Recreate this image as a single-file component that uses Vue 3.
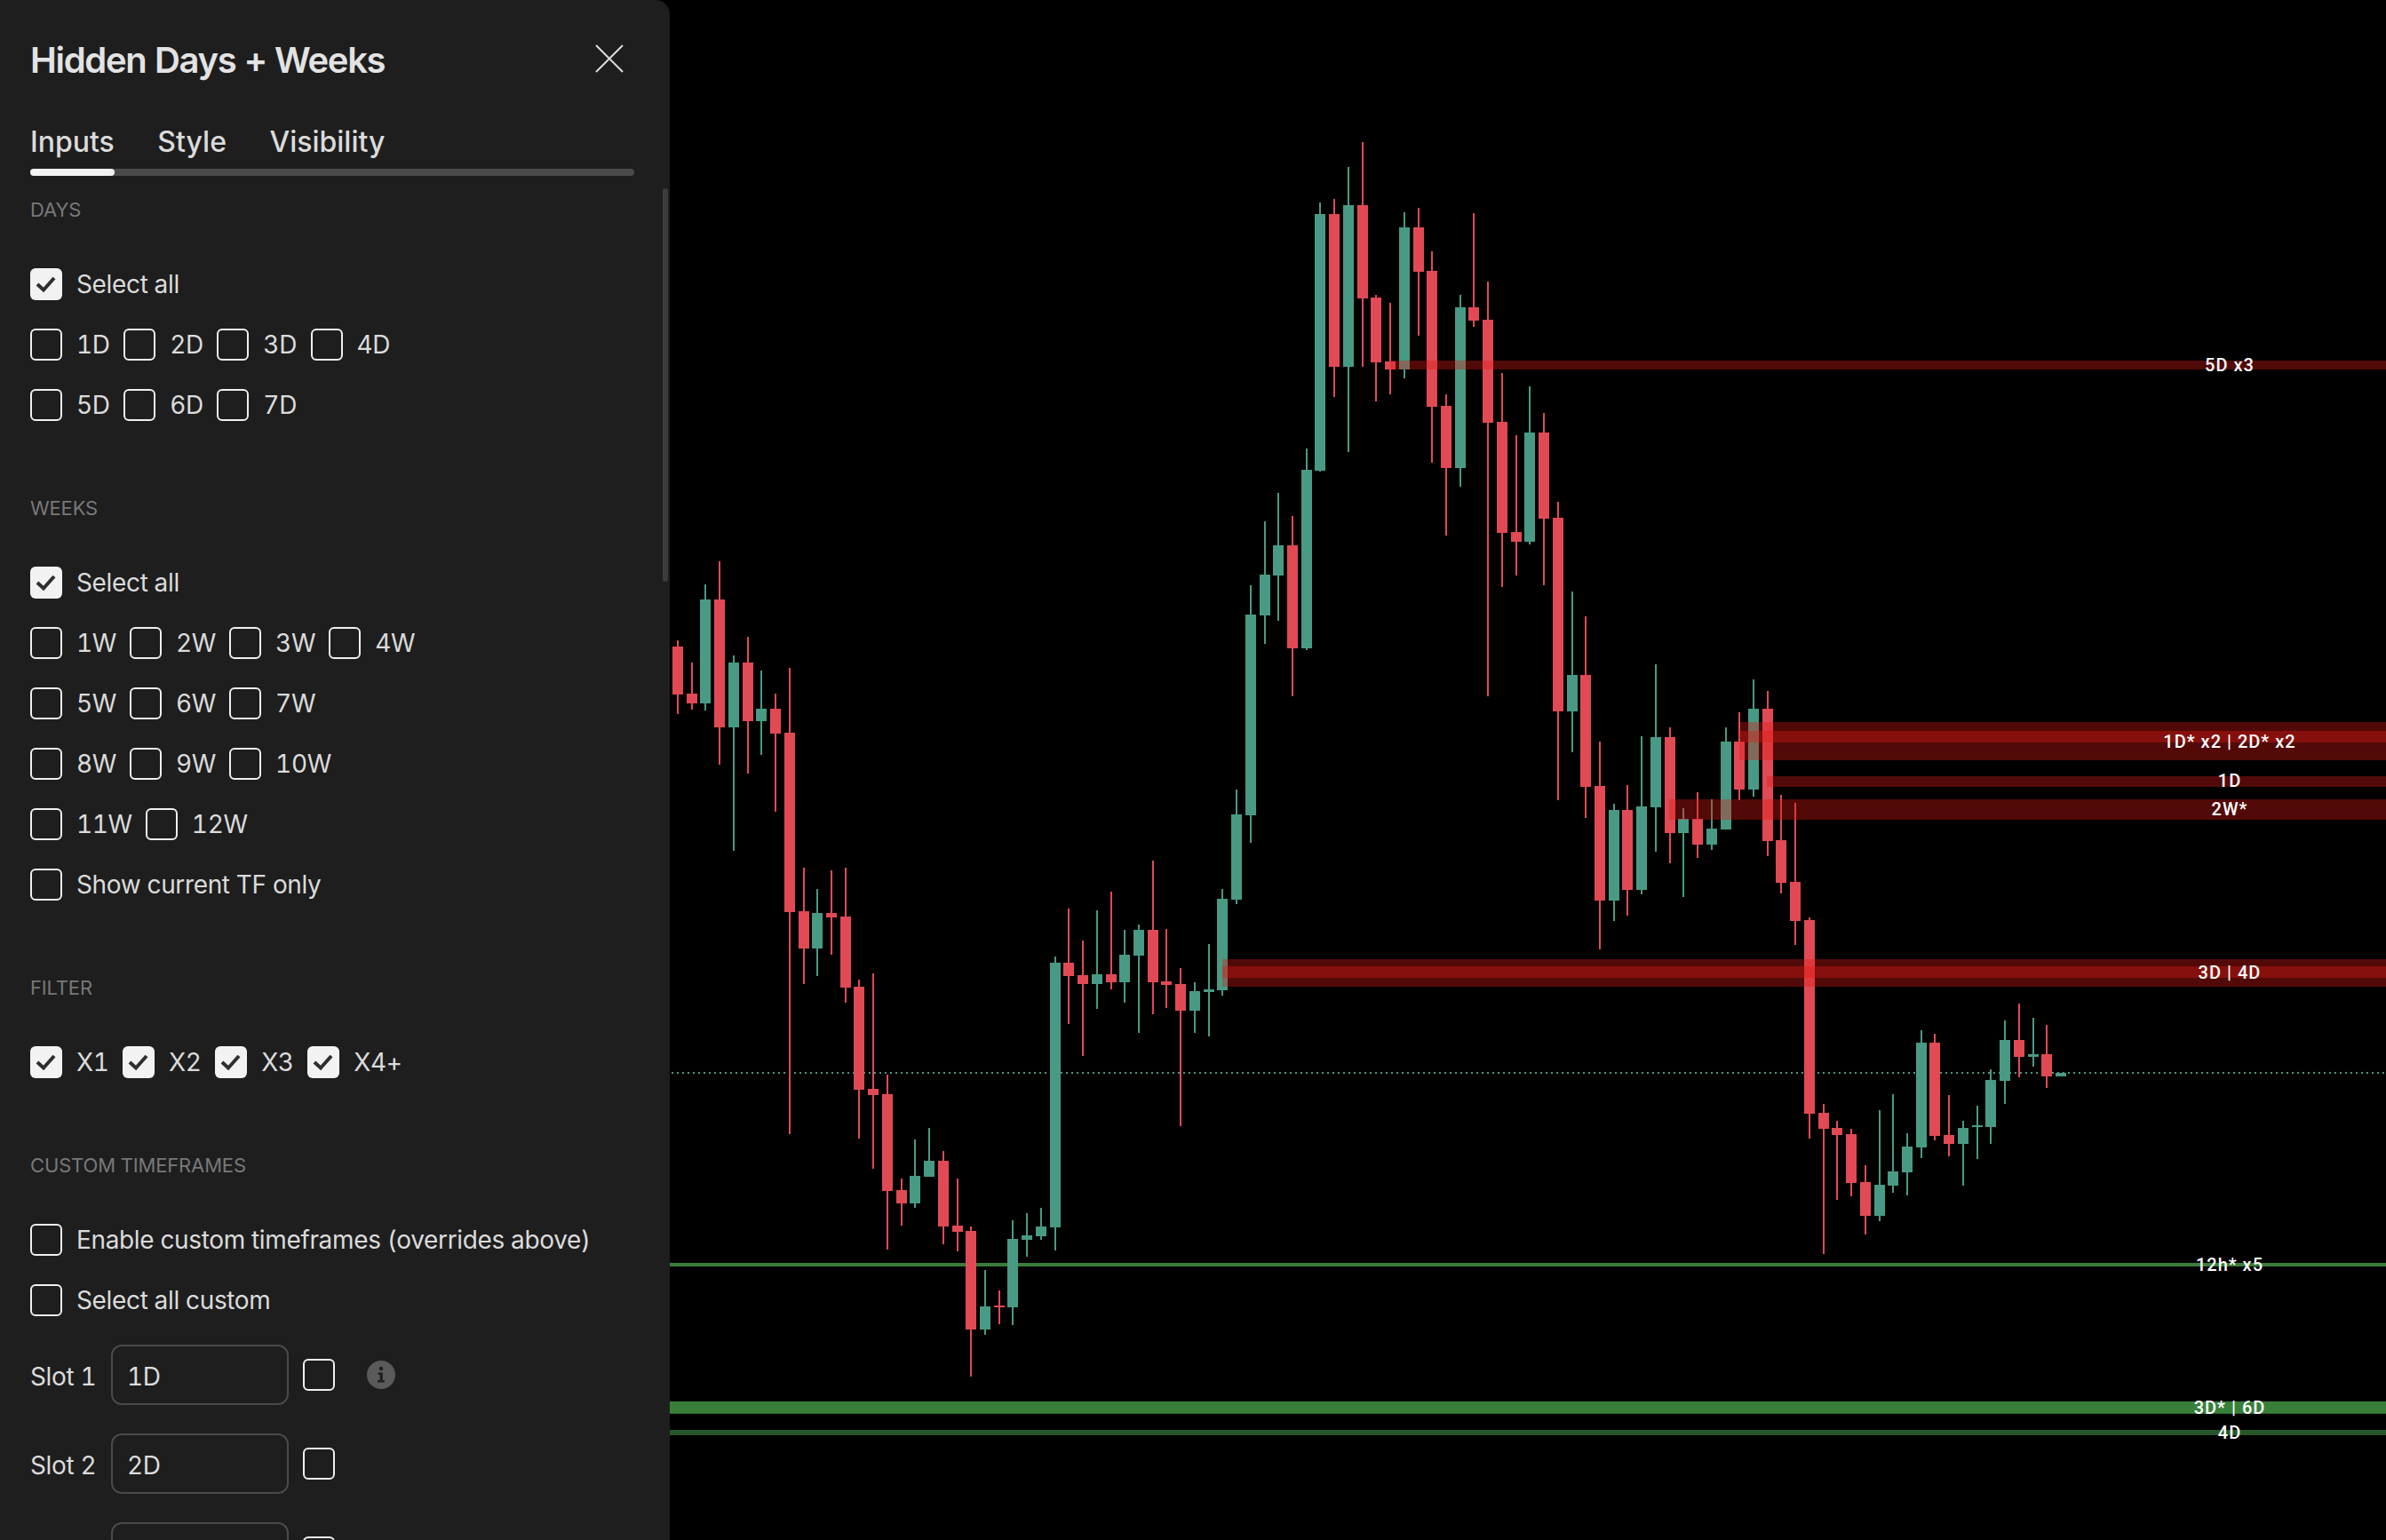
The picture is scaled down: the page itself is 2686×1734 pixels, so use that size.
<script setup>
const dayRows = [['1D', '2D', '3D', '4D'], ['5D', '6D', '7D']]
const weekRows = [['1W', '2W', '3W', '4W'], ['5W', '6W', '7W'], ['8W', '9W', '10W'], ['11W', '12W']]
const filters = ['X1', 'X2', 'X3', 'X4+']
const slots = [
  { id: 1, name: 'Slot 1', value: '1D', info: true },
  { id: 2, name: 'Slot 2', value: '2D', info: false },
  { id: 3, name: '', value: '', info: false }
]

const GREEN = '#499a84'
const RED = '#e14a54'
// direction, body top, body bottom, wick top, wick bottom
const raw = [
  ['r',728,782,721,804],['r',781,792,746,799],['g',675,792,658,800],['r',675,819,632,861],['g',746,819,738,958],
  ['r',746,812,717,871],['g',798,812,755,850],['r',798,826,781,914],['r',825,1027,752,1277],['r',1026,1068,977,1108],
  ['g',1028,1068,1001,1099],['r',1028,1033,980,1075],['r',1032,1112,977,1129],['r',1111,1227,1103,1282],['r',1226,1233,1096,1316],
  ['r',1232,1341,1210,1407],['r',1340,1355,1327,1380],['g',1324,1355,1283,1360],['g',1307,1325,1270,1325],['r',1307,1381,1296,1401],
  ['r',1380,1387,1327,1409],['r',1386,1497,1381,1550],['g',1471,1497,1430,1503],['r',1470,1472,1453,1491],['g',1395,1472,1374,1492],
  ['g',1391,1396,1366,1415],['g',1381,1392,1360,1396],['g',1084,1382,1077,1408],['r',1084,1099,1023,1153],['r',1098,1108,1059,1189],
  ['g',1097,1108,1025,1136],['r',1097,1106,1004,1114],['g',1075,1106,1047,1129],['g',1047,1076,1041,1163],['r',1047,1106,969,1142],
  ['r',1105,1109,1046,1135],['r',1108,1138,1090,1268],['g',1116,1138,1106,1163],['g',1114,1117,1063,1167],['g',1012,1115,1001,1121],
  ['g',917,1013,889,1018],['g',692,918,659,949],['g',647,693,587,725],['g',614,648,555,699],['r',614,730,581,784],
  ['g',529,730,505,732],['g',241,530,228,531],['r',241,413,224,447],['g',231,413,188,509],['r',231,336,160,413],
  ['r',335,408,332,452],['r',407,416,341,444],['g',256,416,239,426],['r',256,306,234,378],['r',305,458,283,521],
  ['r',457,527,444,603],['g',346,527,332,548],['r',346,361,240,368],['r',360,476,317,784],['r',475,600,420,661],
  ['r',599,610,490,648],['g',487,610,435,613],['r',487,584,465,659],['r',583,801,565,901],['g',760,801,666,847],
  ['r',760,886,694,921],['r',885,1014,835,1069],['g',912,1014,905,1037],['r',912,1002,884,1031],['g',908,1002,829,1007],
  ['g',830,909,748,959],['r',830,938,819,972],['g',922,938,910,1010],['r',922,951,892,966],['g',933,951,900,957],
  ['g',835,934,819,934],['r',835,889,802,901],['g',798,889,765,897],['r',798,947,778,964],['r',946,994,895,1006],
  ['r',993,1037,904,1064],['r',1036,1254,1033,1282],['r',1253,1271,1243,1412],['r',1270,1278,1262,1351],['r',1277,1332,1271,1347],
  ['r',1331,1369,1312,1390],['g',1334,1369,1250,1375],['g',1319,1335,1232,1343],['g',1291,1320,1276,1346],['g',1174,1292,1160,1304],
  ['r',1174,1279,1164,1284],['r',1278,1288,1233,1302],['g',1270,1288,1262,1335],['g',1267,1269,1245,1305],['g',1216,1269,1204,1288],
  ['g',1171,1217,1149,1243],['r',1171,1190,1130,1213],['g',1187,1190,1146,1201],['r',1187,1212,1154,1225],['g',1208,1212,1208,1212]
]
const candles = raw.map((c, i) => ({
  x: Math.round(763 + i * 15.727),
  color: c[0] === 'g' ? GREEN : RED,
  top: c[1],
  height: c[2] - c[1],
  wickTop: c[3],
  wickHeight: c[4] - c[3]
}))

const greenBands = [
  { y: 1422, h: 4, color: '#397c3b' },
  { y: 1578, h: 13, color: '#38803a' },
  { y: 1591, h: 1, color: '#2d6932' },
  { y: 1610, h: 6, color: '#27562a' }
]
const redBands = [
  { x: 1565, y: 406, h: 10 },
  { x: 1959, y: 813, h: 23 },
  { x: 1958, y: 823, h: 33 },
  { x: 1989, y: 874, h: 12 },
  { x: 1879, y: 900, h: 23 },
  { x: 1376, y: 1080, h: 21 },
  { x: 1376, y: 1088, h: 23 }
]
const labels = [
  { t: '5D x3', y: 411 },
  { t: '1D* x2 | 2D* x2', y: 835 },
  { t: '1D', y: 879 },
  { t: '2W*', y: 911 },
  { t: '3D | 4D', y: 1095 },
  { t: '12h* x5', y: 1424 },
  { t: '3D* | 6D', y: 1585 },
  { t: '4D', y: 1613 }
]
</script>

<template>
  <div class="app">
    <aside class="panel">
      <header class="head">
        <h1 class="title">Hidden Days + Weeks</h1>
        <svg class="close" width="32" height="32" viewBox="0 0 32 32" fill="none" stroke="#dbdbdb" stroke-width="2">
          <path d="M1 1 L31 31 M31 1 L1 31" />
        </svg>
      </header>
      <nav class="tabs">
        <span>Inputs</span>
        <span>Style</span>
        <span>Visibility</span>
      </nav>
      <div class="track"><div class="track-on"></div></div>

      <div class="section-label first">DAYS</div>
      <div class="rows">
        <label class="opt">
          <span class="box on"><svg width="36" height="36" viewBox="0 0 36 36" fill="none"><path class="tick" d="M8 18 L15 24.500 L27 11" /></svg></span>
          <span>Select all</span>
        </label>
        <div v-for="(row, r) in dayRows" :key="r" class="inline">
          <label v-for="o in row" :key="o" class="opt"><span class="box"></span><span>{{ o }}</span></label>
        </div>
      </div>

      <div class="section-label">WEEKS</div>
      <div class="rows">
        <label class="opt">
          <span class="box on"><svg width="36" height="36" viewBox="0 0 36 36" fill="none"><path class="tick" d="M8 18 L15 24.500 L27 11" /></svg></span>
          <span>Select all</span>
        </label>
        <div v-for="(row, r) in weekRows" :key="r" class="inline tight">
          <label v-for="o in row" :key="o" class="opt"><span class="box"></span><span>{{ o }}</span></label>
        </div>
        <label class="opt"><span class="box"></span><span>Show current TF only</span></label>
      </div>

      <div class="section-label">FILTER</div>
      <div class="rows">
        <div class="inline">
          <label v-for="f in filters" :key="f" class="opt">
            <span class="box on"><svg width="36" height="36" viewBox="0 0 36 36" fill="none"><path class="tick" d="M8 18 L15 24.500 L27 11" /></svg></span>
            <span>{{ f }}</span>
          </label>
        </div>
      </div>

      <div class="section-label">CUSTOM TIMEFRAMES</div>
      <div class="rows">
        <label class="opt"><span class="box"></span><span>Enable custom timeframes (overrides above)</span></label>
        <label class="opt"><span class="box"></span><span>Select all custom</span></label>
        <div v-for="s in slots" :key="s.id" class="slot">
          <span class="slot-name">{{ s.name }}</span>
          <div class="slot-input">{{ s.value }}</div>
          <span class="box"></span>
          <svg v-if="s.info" class="info" width="32" height="32" viewBox="0 0 32 32">
            <circle cx="16" cy="16" r="16" fill="#5a5a5a" />
            <circle cx="16" cy="9" r="2.200" fill="#1e1e1e" />
            <path d="M12.500 13.500 H17.800 V22 H20 V24.500 H12 V22 H14.600 V16 H12.500 Z" fill="#1e1e1e" />
          </svg>
        </div>
      </div>

      <div class="scrollbar"></div>
    </aside>

    <main class="chart">
      <svg class="plot" width="1932" height="1734" viewBox="754 0 1932 1734">
        <g shape-rendering="crispEdges">
          <rect v-for="(b, i) in greenBands" :key="'g' + i" x="754" :y="b.y" width="1932" :height="b.h" :fill="b.color" />
          <line x1="756" y1="1208" x2="2686" y2="1208" stroke="#499a84" stroke-width="2" stroke-dasharray="2 4" />
          <g v-for="(c, i) in candles" :key="i" :fill="c.color">
            <rect :x="c.x - 1" :y="c.wickTop" width="2" :height="c.wickHeight" />
            <rect :x="c.x - 6" :y="c.top" width="12" :height="c.height" />
          </g>
          <rect v-for="(b, i) in redBands" :key="'r' + i" :x="b.x" :y="b.y" :width="2686 - b.x" :height="b.h" fill="rgba(220,27,21,0.373)" />
        </g>
        <text v-for="l in labels" :key="l.t" class="tag" x="2510" :y="l.y" text-anchor="middle" dominant-baseline="central">{{ l.t }}</text>
      </svg>
    </main>
  </div>
</template>

<style>
html, body { margin: 0; background: #000; }
</style>

<style scoped>
.app {
  display: flex;
  width: 2686px;
  height: 1734px;
  overflow: hidden;
  background: #000;
  font-family: Inter, "Liberation Sans", sans-serif;
}
.panel {
  position: relative;
  flex: 0 0 754px;
  box-sizing: border-box;
  height: 1734px;
  padding: 42px 40px 0 34px;
  overflow: hidden;
  background: #1e1e1e;
  border-top-right-radius: 16px;
  color: #dbdbdb;
  font-size: 28px;
  line-height: 40px;
  letter-spacing: -0.35px;
  font-variant-numeric: tabular-nums;
}
.head {
  display: flex;
  align-items: center;
  justify-content: space-between;
  height: 48px;
  padding-right: 12px;
}
.title {
  margin: 4px 0 0;
  font-size: 40px;
  line-height: 48px;
  font-weight: 600;
  color: #e3e3e3;
  letter-spacing: -1.3px;
}
.close { display: block; }
.tabs {
  display: flex;
  gap: 48.5px;
  margin-top: 50px;
  font-size: 32px;
  font-weight: 500;
  line-height: 40px;
  letter-spacing: 0;
  color: #dbdbdb;
}
.track {
  height: 8px;
  margin-top: 10px;
  border-radius: 4px;
  background: #4a4a4a;
}
.track-on {
  width: 95px;
  height: 8px;
  border-radius: 4px;
  background: #f2f2f2;
}
.section-label {
  margin-top: 84px;
  font-size: 22px;
  line-height: 28px;
  letter-spacing: -0.15px;
  color: #787878;
}
.section-label.first { margin-top: 24px; }
.rows {
  display: flex;
  flex-direction: column;
  gap: 32px;
  margin-top: 52px;
}
.inline {
  display: flex;
  gap: 15.5px;
}
.inline.tight { gap: 15px; }
.opt {
  display: flex;
  align-items: center;
  gap: 16px;
  height: 36px;
}
.box {
  flex: none;
  box-sizing: border-box;
  width: 36px;
  height: 36px;
  border: 2px solid #f0f0f0;
  border-radius: 6px;
}
.box.on {
  border: 0;
  background: #f2f2f2;
}
.box svg { display: block; }
.tick {
  stroke: #2e2e2e;
  stroke-width: 4;
}
.slot {
  display: flex;
  align-items: center;
  height: 68px;
}
.slot-name {
  width: 91px;
  margin-top: 4px;
}
.slot-input {
  box-sizing: border-box;
  width: 200px;
  height: 68px;
  padding: 0 16px;
  border: 2px solid #4a4a4a;
  border-radius: 12px;
  line-height: 68px;
  margin-right: 16px;
}
.info { margin-left: 36px; }
.scrollbar {
  position: absolute;
  left: 746px;
  top: 212px;
  width: 6px;
  height: 443px;
  border-radius: 3px;
  background: #3c3c3c;
}
.chart {
  flex: 1;
  height: 1734px;
}
.plot { display: block; }
.tag {
  fill: #fff;
  font-family: Roboto, Inter, sans-serif;
  font-size: 20px;
  font-weight: 500;
  letter-spacing: 1px;
}
</style>
